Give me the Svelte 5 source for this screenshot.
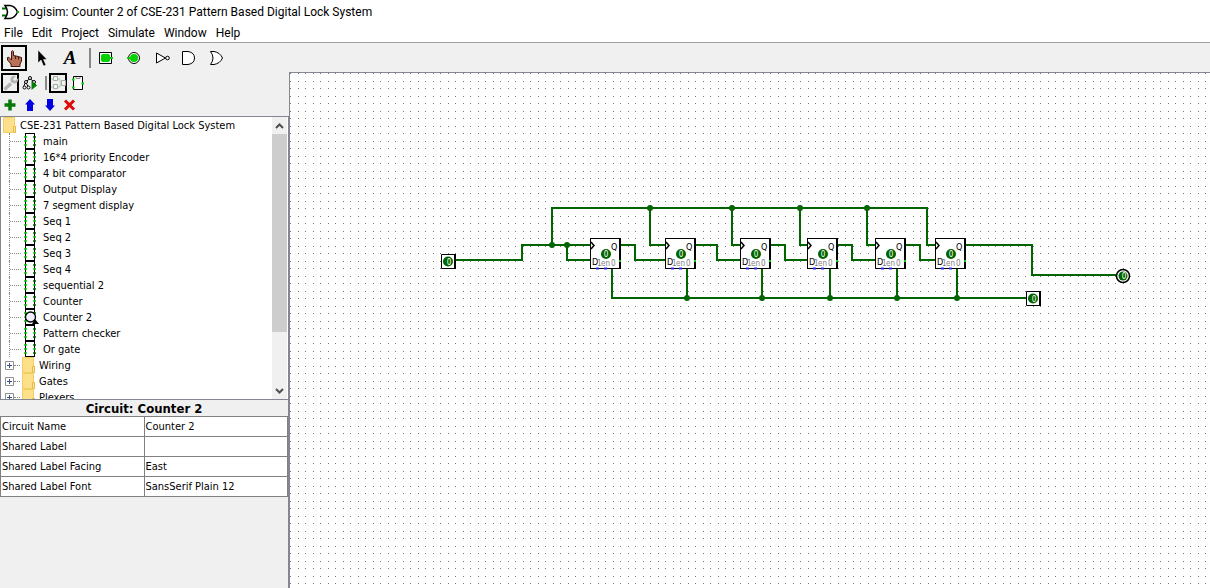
<script>
  const menus = ['File', 'Edit', 'Project', 'Simulate', 'Window', 'Help'];
  const circuits = [
    'main', '16*4 priority Encoder', '4 bit comparator', 'Output Display',
    '7 segment display', 'Seq 1', 'Seq 2', 'Seq 3', 'Seq 4', 'sequential 2',
    'Counter', 'Counter 2', 'Pattern checker', 'Or gate'
  ];
  const libraries = ['Wiring', 'Gates', 'Plexers'];
  const attributes = [
    ['Circuit Name', 'Counter 2'],
    ['Shared Label', ''],
    ['Shared Label Facing', 'East'],
    ['Shared Label Font', 'SansSerif Plain 12']
  ];
  let current = $state('Counter 2');

  const flipFlops = [300, 375, 450, 517, 585, 645];
  const wires = [
    'M165 187H232V172H300', 'M262 172V135H637V172H645', 'M277 172V187H300',
    'M360 135V172H375', 'M442 135V172H450', 'M510 135V172H517', 'M577 135V172H585',
    'M331 172H345V187H375', 'M406 172H427V187H450', 'M481 172H495V187H517',
    'M548 172H562V187H585', 'M616 172H630V187H645', 'M676 172H742V202H828',
    'M322 196V225H736', 'M397 196V225', 'M472 196V225', 'M540 196V225',
    'M607 196V225', 'M667 196V225'
  ];
  const junctions = [
    [262, 172], [277, 172], [360, 135], [442, 135], [510, 135], [577, 135],
    [397, 225], [472, 225], [540, 225], [607, 225], [667, 225]
  ];
</script>

{#snippet folder()}
  <svg class="folder" width="14" height="16" viewBox="0 0 14 16" aria-hidden="true">
    <path d="M0.5 0.5H11.5V9.5H12.5V15.5H0.5Z" fill="#ffe08a" stroke="#f3cd62" />
    <path d="M10.5 15V9.5H12.5V15.5H10.5" fill="#ffe9a8" stroke="#e5b93f" />
  </svg>
{/snippet}

{#snippet chip(open)}
  <svg class="chip" width="16" height="16" viewBox="0 0 16 16" aria-hidden="true">
    <path d="M2.5 0.5H11.5V15.5H2.5Z" fill="#fff" stroke="#000" shape-rendering="crispEdges" />
    <path d="M1 4H4M1 8H4M1 12H4M10 8H13" stroke="#00d000" stroke-width="1.500" />
    <path d="M10 4H13M10 12H13" stroke="#006400" stroke-width="1.500" />
    {#if open}
      <path d="M9 15H16L12 10Z" fill="#000" />
      <circle cx="7.5" cy="8" r="5" fill="#f0f0ff" stroke="#000" stroke-width="1.3" />
    {/if}
  </svg>
{/snippet}

<div class="window">
  <header class="title">
    <svg width="18" height="16" viewBox="0 0 18 16" aria-hidden="true">
      <path d="M0 4.5H5M0 11.5H5" stroke="#007000" stroke-width="2" />
      <path d="M3 1.5H8Q13 2 15.5 8Q13 14 8 14.5H3Q8 8 3 1.5Z" fill="#fff" stroke="#000" stroke-width="1.5" />
      <path d="M15 8H17" stroke="#00b000" stroke-width="2" />
    </svg>
    <h1>Logisim: Counter 2 of CSE-231 Pattern Based Digital Lock System</h1>
  </header>

  <nav class="menubar">
    {#each menus as m}<button>{m}</button>{/each}
  </nav>

  <div class="toolbar">
    <button class="on" aria-label="Poke tool">
      <svg width="20" height="20" viewBox="0 0 20 20">
        <path d="M7.5 10V3.5Q8.5 1.5 9.5 3.5V7.500L12 8L14 8.500L17.500 9.500V13L16 16V18.500H7V16L3.500 12V9.500Q5 8.500 6 10.500L7.500 12Z" fill="#b87058" stroke="#40150c" />
        <path d="M11.500 8V11M14.500 9V11.500" stroke="#40150c" />
      </svg>
    </button>
    <button aria-label="Edit tool">
      <svg width="20" height="20" viewBox="0 0 20 20">
        <path d="M6 2V15L9 12L11.500 18L14 17L11.500 11.500H15Z" fill="#000" stroke="#fff" stroke-width=".5" />
      </svg>
    </button>
    <button class="letter" aria-label="Text tool">A</button>
    <span class="sep"></span>
    <button aria-label="Input pin">
      <svg width="20" height="20" viewBox="0 0 20 20">
        <path d="M3.500 4.500H15.500V15.500H3.500Z" fill="#fff" stroke="#000" />
        <rect x="5" y="6" width="9" height="8" rx="2" fill="#00d000" /><rect x="13" y="9" width="4" height="2" fill="#00d000" />
      </svg>
    </button>
    <button aria-label="Output pin">
      <svg width="20" height="20" viewBox="0 0 20 20">
        <circle cx="10" cy="10" r="5.500" fill="#fff" stroke="#000" />
        <circle cx="10" cy="10" r="4" fill="#00d000" /><rect x="3" y="9" width="4" height="2" fill="#00d000" />
      </svg>
    </button>
    <button aria-label="NOT gate">
      <svg width="20" height="20" viewBox="0 0 20 20">
        <path d="M4.500 5L13.500 10L4.500 15Z" fill="#fff" stroke="#000" /><circle cx="15.500" cy="10" r="1.800" fill="#fff" stroke="#000" />
      </svg>
    </button>
    <button aria-label="AND gate">
      <svg width="20" height="20" viewBox="0 0 20 20">
        <path d="M2.500 3.500H8Q14.500 4.500 14.500 10Q14.500 15.500 8 16.500H2.500Z" fill="#fff" stroke="#000" />
      </svg>
    </button>
    <button aria-label="OR gate">
      <svg width="20" height="20" viewBox="0 0 20 20">
        <path d="M2.500 3.500H6Q12 4.500 14.500 10Q12 15.500 6 16.500H2.500Q7.500 10 2.500 3.500Z" fill="#fff" stroke="#000" />
      </svg>
    </button>
  </div>

  <main>
    <aside>
      <section class="explorer">
        <div class="tools">
          <button class="on" aria-label="Show projects toolbox">
            <svg width="16" height="16" viewBox="0 0 16 16">
              <path d="M1.500 14.500L8 8.500" stroke="#b4b4b4" stroke-width="3.500" />
              <path d="M15.500 3L12 6L10 4L13 1Q8 0 7.500 4Q7 8 11 8.500Q15.500 8.500 15.500 3Z" fill="#b4b4b4" />
            </svg>
          </button>
          <button aria-label="Show simulation tree">
            <svg width="16" height="16" viewBox="0 0 16 16">
              <path d="M8 3.500L3.500 7L1.500 12M3.500 7L6.500 12M8 3.500L12 7L14 11" fill="none" stroke="#000" />
              <g fill="#fff" stroke="#000"><circle cx="8" cy="3" r="1.500" /><circle cx="4" cy="7" r="1.500" /><circle cx="12" cy="7" r="1.500" /><circle cx="2.500" cy="12.500" r="1.500" /><circle cx="6.500" cy="12.500" r="1.500" /></g>
              <path d="M9.500 6V15L15 10.500Z" fill="#008000" />
            </svg>
          </button>
          <span class="sep"></span>
          <button class="on" aria-label="Edit circuit layout">
            <svg width="16" height="16" viewBox="0 0 16 16">
              <path d="M6 4H9V7H11M6 12H9V9H11M0 4H2M0 12H2" fill="none" stroke="#a0d8a0" />
              <path d="M2.500 1.500H6.500V5.500H2.500ZM2.500 9.500H6.500V13.500H2.500ZM10.500 5.500H14.500V10.500H10.500Z" fill="#f5f5f5" stroke="#a8a8a8" />
            </svg>
          </button>
          <button aria-label="Edit circuit appearance">
            <svg width="16" height="16" viewBox="0 0 16 16">
              <path d="M3.500 1.500H12.500V14.500H3.500Z" fill="#fff" stroke="#000" /><path d="M6 2V3.500H10V2" fill="none" stroke="#888" />
              <path d="M2 4.500H4.500M2 12.500H4.500M11.500 8.500H14" stroke="#00d000" stroke-width="2" />
            </svg>
          </button>
        </div>
        <div class="tools second">
          <button aria-label="Add circuit"><svg width="16" height="16" viewBox="0 0 16 16"><path d="M8 2.500V13.500M2.500 8H13.500" stroke="#087808" stroke-width="3.500" /></svg></button>
          <button aria-label="Move circuit up"><svg width="16" height="16" viewBox="0 0 16 16"><path d="M8 2L13 7.500H11V14H5V7.500H3Z" fill="#0000e0" /></svg></button>
          <button aria-label="Move circuit down"><svg width="16" height="16" viewBox="0 0 16 16"><path d="M8 14L13 8.500H11V2H5V8.500H3Z" fill="#0000e0" /></svg></button>
          <button aria-label="Remove circuit"><svg width="16" height="16" viewBox="0 0 16 16"><path d="M3 3.500L12 12.500M12 3.500L3 12.500" stroke="#e00808" stroke-width="3" /></svg></button>
        </div>

        <div class="treebox">
          <ul class="tree">
            <li class="root">{@render folder()}<span>CSE-231 Pattern Based Digital Lock System</span></li>
            {#each circuits as c}
              <li class="circuit"><i></i><button onclick={() => (current = c)}>{@render chip(c === current)}<span>{c}</span></button></li>
            {/each}
            {#each libraries as l}
              <li class="library">
                <button aria-label={'Expand ' + l}><svg width="9" height="9" viewBox="0 0 9 9"><path d="M.5.5H8.500V8.500H.5Z" fill="#fff" stroke="#919191" /><path d="M2 4.500H7M4.500 2V7" stroke="#3c508c" /></svg></button>
                <i></i>{@render folder()}<span>{l}</span>
              </li>
            {/each}
          </ul>
          <div class="scroll">
            <button aria-label="Scroll up"><svg width="9" height="6" viewBox="0 0 9 6"><path d="M1 5L4.500 1.500L8 5" fill="none" stroke="#505050" stroke-width="2" /></svg></button>
            <div class="track"><div class="thumb"></div></div>
            <button aria-label="Scroll down"><svg width="9" height="6" viewBox="0 0 9 6"><path d="M1 1L4.500 4.500L8 1" fill="none" stroke="#505050" stroke-width="2" /></svg></button>
          </div>
        </div>
      </section>

      <section class="attrs">
        <h2>Circuit: {current}</h2>
        <table>
          <tbody>
            {#each attributes as [name, value], i}
              <tr><th scope="row">{name}</th><td>{i === 0 ? current : value}</td></tr>
            {/each}
          </tbody>
        </table>
      </section>
    </aside>

    <div class="canvas">
      <svg width="100%" height="100%" role="img" aria-label="Counter 2 circuit">
        <defs>
          <pattern id="grid" width="15" height="15" patternUnits="userSpaceOnUse">
            <path d="M0 0h1v1h-1zM8 0h1v1h-1zM0 8h1v1h-1zM8 8h1v1h-1z" fill="#777" shape-rendering="crispEdges" />
          </pattern>
        </defs>
        <rect width="100%" height="100%" fill="url(#grid)" />
        {#each flipFlops as x}
          <g transform="translate({x} 165)">
            <rect x="1" y="1" width="29" height="29" fill="#fff" />
            <path d="M0 .5H31M.5 0V31M0 30.500H31" stroke="#000" />
            <path d="M30 0V31" stroke="#000" stroke-width="2" />
            <path d="M1 4L4 7.500L1 11" fill="none" stroke="#000" stroke-width="1.500" />
            <text x="21" y="12" class="port">Q</text>
            <text x="2" y="27" class="port">D</text>
            <text x="7" y="28" class="hint">1</text>
            <text x="11" y="28" class="hint">en</text>
            <text x="21" y="28" class="hint">0</text>
            <circle cx="16" cy="16" r="5" fill="#006400" />
            <text x="16" y="19" class="state">0</text>
            <path d="M6 30.500H9M14 30.500H17" stroke="#2828ff" stroke-width="2" />
            <path d="M29 23H31" stroke="#00d000" stroke-width="2" />
          </g>
        {/each}
        {#each wires as d}<path {d} class="wire" />{/each}
        {#each junctions as [x, y]}<circle cx={x} cy={y} r="3" fill="#006400" />{/each}

        <path d="M151.500 181.500H164.500V195.500H151.500Z" fill="#fff" stroke="#000" />
        <path d="M165 181V196" stroke="#000" stroke-width="2" />
        <circle cx="158" cy="188.500" r="5" fill="#006400" /><text x="159" y="192" class="state">0</text>

        <path d="M736.500 218.500H749.500V232.500H736.500Z" fill="#fff" stroke="#000" />
        <path d="M750 218V233" stroke="#000" stroke-width="2" />
        <circle cx="743" cy="225.500" r="5" fill="#006400" /><text x="744" y="229" class="state">0</text>

        <circle cx="833" cy="203" r="6.500" fill="#fff" stroke="#000" stroke-width="1.500" />
        <circle cx="833" cy="203" r="4.500" fill="#006400" /><text x="834" y="206" class="state">0</text>
      </svg>
    </div>
  </main>
</div>

<style>
  :global(body) { margin: 0; }
  .window {
    height: 100vh; display: flex; flex-direction: column; overflow: hidden;
    background: #f0f0f0; color: #000; font: 11px/16px "DejaVu Sans Condensed", "DejaVu Sans", sans-serif;
  }
  button { border: 0; padding: 0; margin: 0; background: none; font: inherit; color: inherit; }
  ul { list-style: none; margin: 0; padding: 0; }
  h1, h2 { margin: 0; }
  .title { display: flex; align-items: center; gap: 3px; height: 24px; padding-left: 2px; background: #fff; }
  .title h1 { font: 12px/24px Roboto, sans-serif; white-space: nowrap; }
  .menubar { display: flex; gap: 9px; height: 18px; padding-left: 4px; background: #fff; border-bottom: 1px solid #a0a0a0; font: 12px/18px Roboto, sans-serif; }
  .toolbar { display: flex; gap: 2px; padding: 2px 1px 1px; }
  .toolbar button { width: 26px; height: 26px; display: grid; place-items: center; box-sizing: border-box; }
  .toolbar .letter { font: italic bold 19px/26px "Liberation Serif", serif; }
  .toolbar .on, .tools .on { border: 2px solid #000; }
  .sep { width: 2px; margin: 3px 0 3px 4px; background: #888; }
  main { flex: 1; min-height: 0; display: flex; }
  aside { flex: 0 0 289px; display: grid; grid-template-rows: 328fr 188fr; min-height: 0; }
  .explorer { display: flex; flex-direction: column; min-height: 0; }
  .tools { display: flex; gap: 2px; padding: 1px 1px 0; height: 20px; }
  .tools.second { height: 22px; }
  .tools button { width: 18px; height: 20px; display: grid; place-items: center; box-sizing: border-box; }
  .tools.second button { height: 22px; }
  .treebox { flex: 1; min-height: 0; display: flex; border: 1px solid #828790; background: #fff; }
  .tree { flex: 1; overflow: hidden; }
  li { display: flex; align-items: center; height: 16px; white-space: nowrap; }
  li svg { flex: none; }
  li span { line-height: 14px; padding-top: 2px; }
  .root { padding-left: 2px; gap: 3px; }
  .circuit { margin-left: 8px; border-left: 1px dotted #888; }
  .circuit button { display: flex; align-items: center; margin-left: 2px; }
  .circuit span { margin-left: 4px; }
  i { width: 11px; border-top: 1px dotted #888; }
  .library { padding-left: 4px; }
  .library button { display: flex; }
  .library i { width: 6px; margin-right: 2px; }
  .library span { margin-left: 3px; }
  .scroll { width: 15px; margin-right: 1px; display: flex; flex-direction: column; background: #f0f0f0; }
  .scroll button { height: 17px; display: grid; place-items: center; }
  .track { flex: 1; }
  .thumb { height: 80%; background: #cdcdcd; }
  .attrs { border-right: 1px solid #828790; min-height: 0; }
  h2 { font-size: 13px; line-height: 14px; padding-top: 2px; text-align: center; }
  table { width: 100%; border-collapse: collapse; table-layout: fixed; background: #fff; }
  th, td { height: 19px; padding: 0 0 0 1px; border: 1px solid #808080; font-weight: normal; text-align: left; line-height: 19px; }
  .canvas { flex: 1; min-width: 0; background: #fff; border: solid #828790; border-width: 1px 0 0 1px; }
  .canvas svg { display: block; }
  .wire { fill: none; stroke: #006400; stroke-width: 2; }
  .port { font: 9px "DejaVu Sans Condensed", sans-serif; }
  .hint { font: 8px "DejaVu Sans Condensed", sans-serif; fill: #808080; }
  .state { font: 8px "DejaVu Sans Condensed", sans-serif; fill: #fff; text-anchor: middle; }
</style>
